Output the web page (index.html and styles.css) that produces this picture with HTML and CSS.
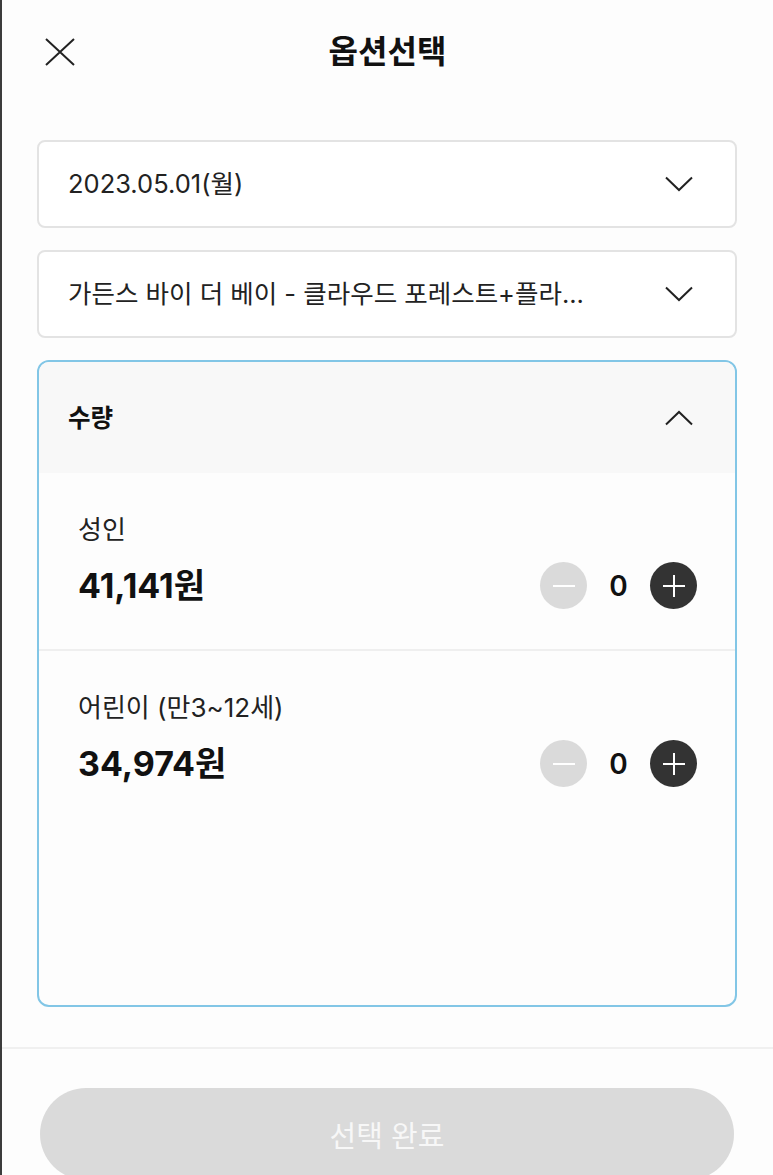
FILE: index.html
```html
<!DOCTYPE html>
<html lang="ko">
<head>
<meta charset="utf-8">
<title>옵션선택</title>
<link rel="stylesheet" href="styles.css">
</head>
<body>
<div class="page">
  <header class="topbar">
    <button class="close" aria-label="닫기">
      <svg width="30" height="28" viewBox="0 0 30 28"><path d="M1 1 L29 27 M29 1 L1 27" stroke="#222" stroke-width="2" fill="none"/></svg>
    </button>
    <h1 class="title">옵션선택</h1>
    <span class="spacer"></span>
  </header>

  <main class="content">
    <div class="select">
      <span class="select-text">2023.05.01(월)</span>
      <svg class="chev" width="28" height="16" viewBox="0 0 28 16"><path d="M1 1.5 L14 14 L27 1.5" stroke="#222" stroke-width="2" fill="none"/></svg>
    </div>
    <div class="select">
      <span class="select-text">가든스 바이 더 베이 - 클라우드 포레스트+플라...</span>
      <svg class="chev" width="28" height="16" viewBox="0 0 28 16"><path d="M1 1.5 L14 14 L27 1.5" stroke="#222" stroke-width="2" fill="none"/></svg>
    </div>

    <section class="card">
      <div class="card-head">
        <span class="card-title">수량</span>
        <svg class="chev" width="28" height="16" viewBox="0 0 28 16"><path d="M1 14.5 L14 2 L27 14.5" stroke="#222" stroke-width="2" fill="none"/></svg>
      </div>

      <div class="row">
        <div class="row-label">성인</div>
        <div class="row-main">
          <span class="price">41,141원</span>
          <div class="counter">
            <span class="btn minus"><svg width="24" height="24" viewBox="0 0 24 24"><path d="M1 12 H23" stroke="#fff" stroke-width="2"/></svg></span>
            <span class="qty">0</span>
            <span class="btn plus"><svg width="24" height="24" viewBox="0 0 24 24"><path d="M1 12 H23 M12 1 V23" stroke="#fff" stroke-width="2"/></svg></span>
          </div>
        </div>
      </div>

      <div class="row">
        <div class="row-label">어린이 (만3~12세)</div>
        <div class="row-main">
          <span class="price">34,974원</span>
          <div class="counter">
            <span class="btn minus"><svg width="24" height="24" viewBox="0 0 24 24"><path d="M1 12 H23" stroke="#fff" stroke-width="2"/></svg></span>
            <span class="qty">0</span>
            <span class="btn plus"><svg width="24" height="24" viewBox="0 0 24 24"><path d="M1 12 H23 M12 1 V23" stroke="#fff" stroke-width="2"/></svg></span>
          </div>
        </div>
      </div>
    </section>
  </main>

  <footer class="footer">
    <button class="submit">선택 완료</button>
  </footer>
</div>
</body>
</html>
```

FILE: styles.css
```css
html, body {
  margin: 0;
  padding: 0;
  overflow: hidden;
  background: #fdfdfd;
}

body {
  font-family: Inter, "Noto Sans CJK KR", "Noto Sans", sans-serif;
  color: #1a1a1a;
}

.page {
  border-left: 2px solid #3c3c3c;
  min-height: 1175px;
  box-sizing: border-box;
}

.topbar {
  height: 104px;
  padding: 0 43px;
  display: grid;
  grid-template-columns: 1fr auto 1fr;
  align-items: center;
}

.close {
  border: 0;
  background: none;
  padding: 0;
  width: 30px;
  height: 28px;
  display: flex;
}

.title {
  margin: 0;
  font-size: 32px;
  font-weight: 700;
  line-height: 40px;
  color: #111;
}

.content {
  padding: 36px 36px 40px 35px;
  display: flex;
  flex-direction: column;
  gap: 22px;
}

.select {
  height: 88px;
  box-sizing: border-box;
  border: 2px solid #e3e3e3;
  border-radius: 8px;
  background: #fff;
  padding: 0 42px 0 29px;
  display: flex;
  align-items: center;
  justify-content: space-between;
}

.select-text {
  font-size: 25.5px;
  line-height: 32px;
  color: #222;
  white-space: nowrap;
}

.chev {
  display: block;
  flex: none;
}

.card {
  height: 647px;
  box-sizing: border-box;
  border: 2px solid #82c6e6;
  border-radius: 12px;
  overflow: hidden;
  background: #fdfdfd;
}

.card-head {
  height: 111px;
  background: #f8f8f8;
  padding: 0 42px 0 29px;
  display: flex;
  align-items: center;
  justify-content: space-between;
}

.card-title {
  font-size: 24.5px;
  font-weight: 700;
  line-height: 32px;
  color: #111;
}

.row {
  padding: 41px 38px 40px 39px;
}

.row + .row {
  border-top: 2px solid #efefef;
}

.row-label {
  font-size: 26px;
  line-height: 32px;
  color: #222;
}

.row-main {
  margin-top: 16px;
  display: flex;
  align-items: center;
  justify-content: space-between;
}

.price {
  font-size: 34px;
  font-weight: 700;
  line-height: 40px;
  color: #111;
}

.counter {
  display: flex;
  align-items: center;
}

.btn {
  width: 47px;
  height: 47px;
  border-radius: 50%;
  display: flex;
  align-items: center;
  justify-content: center;
}

.minus {
  background: #dadada;
}

.plus {
  background: #333;
}

.qty {
  width: 63px;
  text-align: center;
  font-size: 28px;
  font-weight: 600;
  line-height: 40px;
  color: #111;
}

.footer {
  border-top: 2px solid #f0f0f0;
  padding: 39px 39px 0 38px;
}

.submit {
  display: block;
  width: 100%;
  height: 92px;
  border: 0;
  border-radius: 46px;
  background: #dadada;
  color: #f7f7f7;
  font-family: "Noto Sans CJK KR", "Noto Sans", sans-serif;
  font-size: 29px;
  font-weight: 400;
}
```
